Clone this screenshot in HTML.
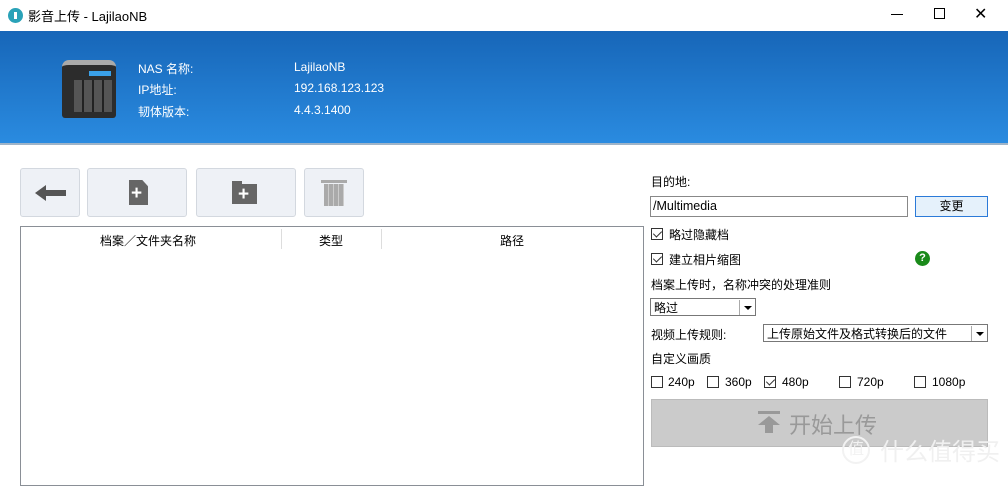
<!DOCTYPE html>
<html><head><meta charset="utf-8"><style>
*{margin:0;padding:0;box-sizing:border-box}
body{width:1008px;height:475px;overflow:hidden;background:#fff;font-family:"Liberation Sans","Noto Sans CJK SC",sans-serif;font-size:12px;color:#000;position:relative}
.a{position:absolute}
.hdr{top:31px;left:0;width:1008px;height:114px;background:linear-gradient(#1766b8,#2a8be0);border-bottom:2px solid #9fb4c8}
.w{color:#fff;font-size:12px}
.btn{background:#eef1f6;border:1px solid #d3d8df;border-radius:3px;height:49px;top:168px}
.cb{width:12px;height:12px;border:1px solid #333;background:#fff}
.cb.c::after{content:"";position:absolute;left:3px;top:0px;width:4px;height:7px;border:solid #333;border-width:0 1.3px 1.3px 0;transform:rotate(45deg)}
.sel{border:1px solid #777;background:#fff;height:18px}
.arr{position:absolute;right:1px;top:1px;width:15px;height:15px;background:#fff;border-left:1px solid #aaa}
.arr::after{content:"";position:absolute;left:4px;top:6px;border:4px solid transparent;border-top:4px solid #000}
</style></head><body>
<div class="a" style="left:8px;top:8px;width:15px;height:15px;border-radius:50%;background:#2aa2b8"></div>
<div class="a" style="left:14px;top:12px;width:3px;height:7px;background:#fff"></div>
<div class="a" style="left:28px;top:6px;font-size:13px">影音上传 - LajilaoNB</div>
<div class="a" style="left:891px;top:14px;width:12px;height:1px;background:#000"></div>
<div class="a" style="left:934px;top:8px;width:11px;height:11px;border:1px solid #000"></div>
<div class="a" style="left:974px;top:4px;font-size:16px">✕</div>
<div class="a hdr"></div>
<div class="a" style="left:62px;top:60px;width:54px;height:58px;background:#2c2c2c;border-radius:7px 7px 3px 3px;border-top:5px solid #aaa"></div>
<div class="a" style="left:89px;top:71px;width:22px;height:5px;background:#3aa0e8"></div>
<div class="a" style="left:74px;top:80px;width:38px;height:32px;background:repeating-linear-gradient(90deg,#555 0 8px,#222 8px 10px)"></div>
<div class="a w" style="left:138px;top:60px">NAS 名称:</div>
<div class="a w" style="left:138px;top:81px">IP地址:</div>
<div class="a w" style="left:138px;top:103px">韧体版本:</div>
<div class="a w" style="left:294px;top:60px">LajilaoNB</div>
<div class="a w" style="left:294px;top:81px">192.168.123.123</div>
<div class="a w" style="left:294px;top:103px">4.4.3.1400</div>
<div class="a btn" style="left:20px;width:60px"></div>
<div class="a" style="left:35px;top:185px;width:0;height:0;border-top:8px solid transparent;border-bottom:8px solid transparent;border-right:11px solid #555"></div>
<div class="a" style="left:45px;top:190px;width:21px;height:6px;background:#555"></div>
<div class="a btn" style="left:87px;width:100px"></div>
<div class="a" style="left:129px;top:180px;width:19px;height:25px;background:#666;clip-path:polygon(0 0,70% 0,100% 25%,100% 100%,0 100%)"></div>
<div class="a" style="left:131px;top:183px;color:#fff;font-size:19px;font-weight:bold">+</div>
<div class="a btn" style="left:196px;width:100px"></div>
<div class="a" style="left:232px;top:181px;width:10px;height:4px;background:#666"></div>
<div class="a" style="left:232px;top:184px;width:25px;height:20px;background:#666"></div>
<div class="a" style="left:238px;top:184px;color:#fff;font-size:19px;font-weight:bold">+</div>
<div class="a btn" style="left:304px;width:60px"></div>
<div class="a" style="left:321px;top:180px;width:26px;height:3px;background:#aaa"></div>
<div class="a" style="left:324px;top:184px;width:20px;height:22px;background:repeating-linear-gradient(90deg,#aaa 0 4px,#ccc 4px 5px)"></div>
<div class="a" style="left:20px;top:226px;width:624px;height:260px;border:1px solid #8a8f96"></div>
<div class="a" style="left:100px;top:232px">档案／文件夹名称</div>
<div class="a" style="top:229px;width:1px;height:20px;background:#ddd;left:281px"></div>
<div class="a" style="left:319px;top:232px">类型</div>
<div class="a" style="left:381px;top:229px;width:1px;height:20px;background:#ddd"></div>
<div class="a" style="left:500px;top:232px">路径</div>
<div class="a" style="left:651px;top:173px">目的地:</div>
<div class="a" style="left:650px;top:196px;width:258px;height:21px;border:1px solid #888;padding:2px 2px;font-size:12.5px">/Multimedia</div>
<div class="a" style="left:915px;top:196px;width:73px;height:21px;border:1px solid #2b7ad8;background:#e5f1fb;text-align:center;line-height:19px">变更</div>
<div class="a cb c" style="left:651px;top:228px"></div><div class="a" style="left:669px;top:226px">略过隐藏档</div>
<div class="a cb c" style="left:651px;top:253px"></div><div class="a" style="left:669px;top:251px">建立相片缩图</div>
<div class="a" style="left:915px;top:251px;width:15px;height:15px;border-radius:50%;background:#1a8a1a;color:#fff;font-weight:bold;font-size:11px;text-align:center;line-height:15px">?</div>
<div class="a" style="left:651px;top:276px">档案上传时，名称冲突的处理准则</div>
<div class="a sel" style="left:650px;top:298px;width:106px;padding-left:3px">略过<div class="arr"></div></div>
<div class="a" style="left:651px;top:326px">视频上传规则:</div>
<div class="a sel" style="left:763px;top:324px;width:225px;padding-left:3px">上传原始文件及格式转换后的文件<div class="arr"></div></div>
<div class="a" style="left:651px;top:350px">自定义画质</div>
<div class="a cb" style="left:651px;top:376px"></div><div class="a" style="left:668px;top:375px">240p</div>
<div class="a cb" style="left:707px;top:376px"></div><div class="a" style="left:725px;top:375px">360p</div>
<div class="a cb c" style="left:764px;top:376px"></div><div class="a" style="left:782px;top:375px">480p</div>
<div class="a cb" style="left:839px;top:376px"></div><div class="a" style="left:857px;top:375px">720p</div>
<div class="a cb" style="left:914px;top:376px"></div><div class="a" style="left:932px;top:375px">1080p</div>
<div class="a" style="left:651px;top:399px;width:337px;height:48px;background:#cbcbcb;border:1px solid #bbb"></div>
<div class="a" style="left:758px;top:411px;width:22px;height:3px;background:#999"></div>
<div class="a" style="left:758px;top:416px;width:0;height:0;border:11px solid transparent;border-bottom:9px solid #999;border-top:0"></div>
<div class="a" style="left:765px;top:424px;width:8px;height:9px;background:#999"></div>
<div class="a" style="left:789px;top:408px;font-size:22px;color:#999">开始上传</div>
<div class="a" style="left:842px;top:436px;width:28px;height:28px;border-radius:50%;border:2px solid #f2f2f2;color:#f2f2f2;font-size:16px;text-align:center;line-height:24px">值</div>
<div class="a" style="left:880px;top:432px;font-size:24px;color:#f0f0f0">什么值得买</div>
</body></html>
